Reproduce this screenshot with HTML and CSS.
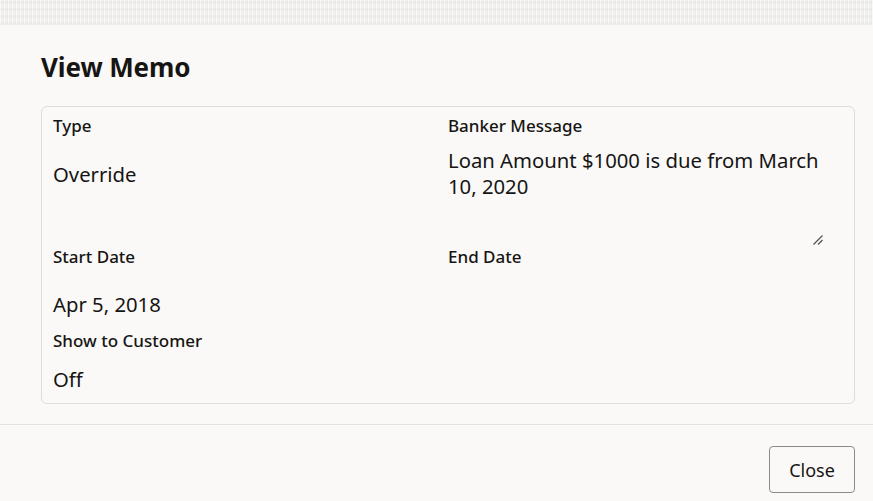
FILE: index.html
```html
<!DOCTYPE html>
<html lang="en">
<head>
<meta charset="utf-8">
<title>View Memo</title>
<link rel="stylesheet" href="styles.css">
</head>
<body>
<div class="backdrop"></div>
<div class="dialog">
  <header class="dialog-header">
    <h1 class="dialog-title">View Memo</h1>
  </header>
  <div class="dialog-body">
    <div class="card">
      <div class="grid">
        <div class="field">
          <div class="label">Type</div>
          <div class="value type">Override</div>
        </div>
        <div class="field field-msg">
          <div class="label">Banker Message</div>
          <div class="value msg">Loan Amount $1000 is due from March 10, 2020</div>
          <svg class="resize" width="12" height="12" viewBox="0 0 12 12" aria-hidden="true">
            <path d="M1.5 10.5 L10.5 1.5 M6 10.5 L10.5 6" stroke="#555" stroke-width="1.3" fill="none"/>
          </svg>
        </div>
        <div class="field">
          <div class="label">Start Date</div>
          <div class="value date">Apr 5, 2018</div>
        </div>
        <div class="field">
          <div class="label">End Date</div>
        </div>
        <div class="field field-show">
          <div class="label">Show to Customer</div>
          <div class="value off">Off</div>
        </div>
      </div>
    </div>
  </div>
  <footer class="dialog-footer">
    <button class="btn">Close</button>
  </footer>
</div>
</body>
</html>
```
FILE: styles.css
```css
* { box-sizing: border-box; }
html, body { margin: 0; padding: 0; }
body {
  width: 873px;
  height: 501px;
  overflow: hidden;
  background: #faf9f8;
  font-family: "Noto Sans", "Open Sans", sans-serif;
  color: #161513;
}
.backdrop {
  height: 25px;
  background-color: #eeedeb;
  background-image:
    repeating-linear-gradient(90deg, rgba(255,255,255,0.75) 0 1px, transparent 1px 2px, rgba(255,255,255,0.4) 2px 3px, transparent 3px 4px),
    repeating-linear-gradient(0deg, rgba(222,220,217,0.45) 0 3px, transparent 3px 7px);
}
.dialog { background: #faf9f8; }
.dialog-header { padding: 25px 41px 0; }
.dialog-title {
  margin: 0;
  font-size: 26px;
  font-weight: 700;
  line-height: 34px;
  letter-spacing: -0.1px;
}
.dialog-body { padding: 22px 18px 20px 41px; }
.card {
  border: 1px solid #dfddda;
  border-radius: 6px;
  padding: 8px 11px 11px;
  background: #faf9f8;
}
.grid {
  display: grid;
  grid-template-columns: 395px 1fr;
}
.field { position: relative; }
.label {
  font-size: 17px;
  font-weight: 500;
  line-height: 22px;
}
.value {
  font-size: 20.3px;
  line-height: 26px;
}
.type { padding-top: 24px; }
.field-msg { height: 131px; }
.msg { padding-top: 10px; padding-right: 24px; }
.resize { position: absolute; right: 19px; bottom: 0; }
.date { padding-top: 23px; }
.field-show { padding-top: 13px; }
.off { padding-top: 14px; }
.dialog-footer {
  border-top: 1px solid #e4e2df;
  padding: 21px 18px 8px;
  display: flex;
  justify-content: flex-end;
}
.btn {
  font-family: inherit;
  font-size: 18px;
  color: #161513;
  background: #faf9f8;
  border: 1px solid #8e8b86;
  border-radius: 4px;
  width: 86px;
  height: 47px;
}
```
